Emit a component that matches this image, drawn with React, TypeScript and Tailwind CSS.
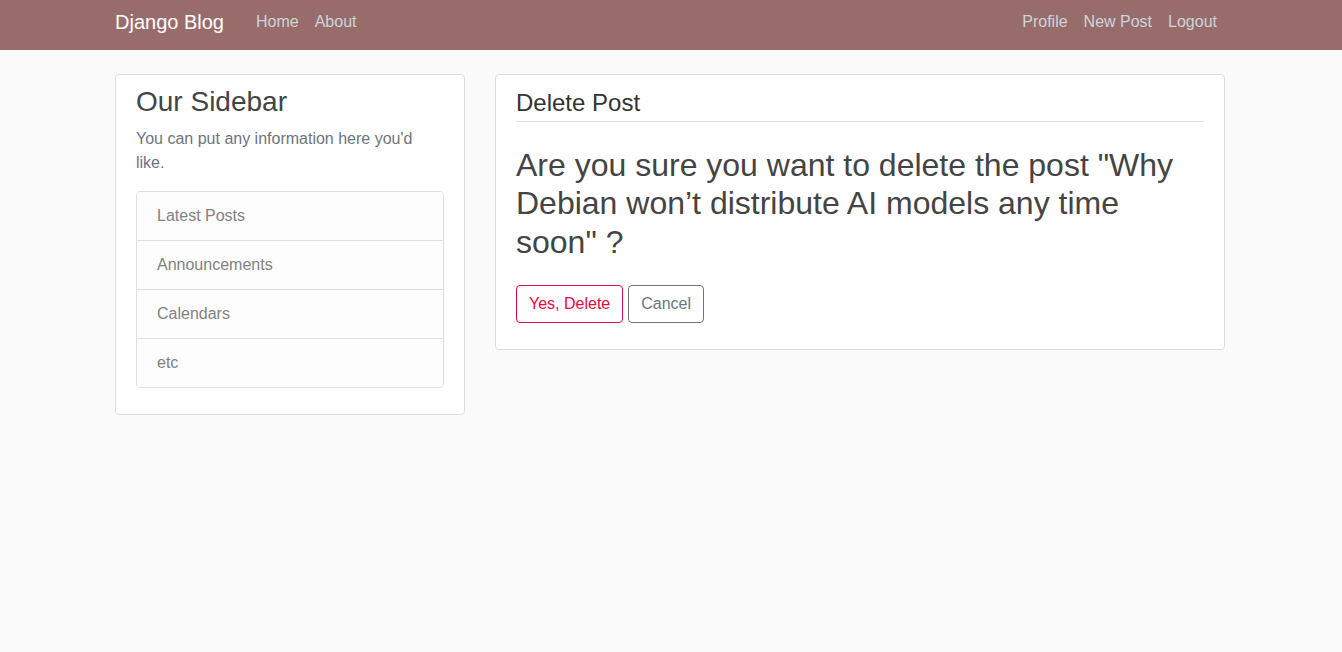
export default function App() {
  const links = ['Latest Posts', 'Announcements', 'Calendars', 'etc'];

  return (
    <div className="min-h-screen bg-[#fafafa] text-[#333333] font-['Liberation_Sans',Arial,sans-serif] text-[16px] leading-[24px]">
      <header className="h-[50px] bg-[#996c6c]">
        <div className="mx-auto flex h-[44px] w-[1112px] items-center pr-[2px]">
          <a className="mr-[24px] text-[20px] leading-[30px] text-white">Django Blog</a>
          <nav className="flex">
            <a className="px-[8px] text-[#cbd5db]">Home</a>
            <a className="px-[8px] text-[#cbd5db]">About</a>
          </nav>
          <nav className="ml-auto flex">
            <a className="px-[8px] text-[#cbd5db]">Profile</a>
            <a className="px-[8px] text-[#cbd5db]">New Post</a>
            <a className="px-[8px] text-[#cbd5db]">Logout</a>
          </nav>
        </div>
      </header>

      <main className="mx-auto grid w-[1112px] grid-cols-[350px_730px] items-start gap-[30px] pt-[24px] pr-[2px]">
        <aside className="rounded-[4px] border border-[#dddddd] bg-white px-[20px] pt-[10px] pb-[10px]">
          <h3 className="mb-[8px] text-[28px] leading-[1.2] text-[#444444]">Our Sidebar</h3>
          <p className="mb-[16px] text-[#6c757d]">You can put any information here you'd like.</p>
          <ul className="mb-[16px] overflow-hidden rounded-[4px] border border-[#dfdfdf]">
            {links.map((l, i) => (
              <li
                key={l}
                className={`bg-[#fdfdfe] px-[20px] py-[12px] text-[#818182] ${i > 0 ? 'border-t border-[#dfdfdf]' : ''}`}
              >
                {l}
              </li>
            ))}
          </ul>
        </aside>

        <section className="rounded-[4px] border border-[#dddddd] bg-white px-[20px] pt-[10px] pb-[10px]">
          <form>
            <fieldset>
              <legend className="mb-[24px] w-full border-b border-[#dee2e6] text-[24px] leading-[36px] text-[#333333]">
                Delete Post
              </legend>
              <h2 className="mb-[24px] text-[32px] leading-[1.2] text-[#444444]">
                Are you sure you want to delete the post "Why Debian won’t distribute AI models any time soon" ?
              </h2>
            </fieldset>
            <div className="mb-[16px] flex gap-[5px]">
              <button
                type="button"
                className="rounded-[4px] border border-[#e8083f] px-[12px] py-[6px] leading-[24px] text-[#e8083f]"
              >
                Yes, Delete
              </button>
              <button
                type="button"
                className="rounded-[4px] border border-[#6c757d] px-[12px] py-[6px] leading-[24px] text-[#6c757d]"
              >
                Cancel
              </button>
            </div>
          </form>
        </section>
      </main>
    </div>
  );
}
